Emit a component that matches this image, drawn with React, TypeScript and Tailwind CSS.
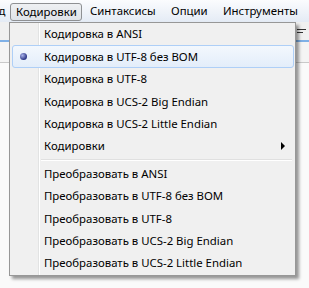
import React from "react";

const enc = [
  "Кодировка в ANSI",
  "Кодировка в UTF-8 без BOM",
  "Кодировка в UTF-8",
  "Кодировка в UCS-2 Big Endian",
  "Кодировка в UCS-2 Little Endian",
];
const conv = [
  "Преобразовать в ANSI",
  "Преобразовать в UTF-8 без BOM",
  "Преобразовать в UTF-8",
  "Преобразовать в UCS-2 Big Endian",
  "Преобразовать в UCS-2 Little Endian",
];

function Item({ label, checked, sub }: { label: string; checked?: boolean; sub?: boolean }) {
  return (
    <div className="relative h-[22.4px] flex items-center">
      {checked && (
        <div className="absolute left-[2px] right-[1px] top-0 bottom-0 rounded-[3px] border border-[#aecff7] bg-gradient-to-b from-[#f3f8fd] to-[#e3edfa]" />
      )}
      {checked && (
        <div className="absolute left-[10px] top-[8px] w-[7px] h-[7px] rounded-full bg-[radial-gradient(circle_at_35%_35%,#a9b3ea,#2b3585_70%)]" />
      )}
      <span className="relative pl-[34px] text-[11.4px] text-black leading-none whitespace-nowrap">{label}</span>
      {sub && (
        <svg className="absolute right-[10px] top-[7px]" width="4" height="8" viewBox="0 0 4 8">
          <path d="M0 0 L4 4 L0 8 Z" fill="#000" />
        </svg>
      )}
    </div>
  );
}

export default function App() {
  return (
    <div
      className="relative w-[309px] h-[288px] overflow-hidden bg-[#f7f7f7]"
      style={{ fontFamily: '"Noto Sans", "Segoe UI", sans-serif' }}
    >
      {/* menubar */}
      <div className="h-[22px] flex items-center bg-gradient-to-b from-[#fbfcfe] to-[#e4ebf5] text-[11.4px] text-black whitespace-nowrap">
        <span className="ml-[-16px] w-[26px] shrink-0">Вид</span>
        <span className="w-[72px] shrink-0 h-[18px] mt-[2px] pl-[5px] flex items-center rounded-[3px] border border-[#8e9093] bg-gradient-to-b from-[#eef0f3] to-[#dfe3e8]">
          Кодировки
        </span>
        <span className="ml-[8px] w-[81px] shrink-0">Синтаксисы</span>
        <span className="w-[52px] shrink-0">Опции</span>
        <span className="shrink-0">Инструменты</span>
      </div>
      {/* background content */}
      <div className="h-[18px] bg-[#f0f0f0] flex justify-end items-center pr-[3px]">
        <div className="flex flex-col gap-[2px] w-[9px]">
          <div className="h-[1px] bg-[#333]" />
          <div className="h-[1px] bg-[#333] w-[6px]" />
        </div>
      </div>
      <div className="h-[2px] bg-[#7fb0e6]" />
      <div className="h-[21px] bg-[#f4f4f4] border-b border-[#c9c9c9]" />
      <div className="h-[225px] bg-[#fafafa]" />

      {/* dropdown */}
      <div className="absolute left-[9px] top-[22px] w-[287px] border border-[#979797] bg-[#f0f0f0] shadow-[3px_3px_3px_rgba(0,0,0,0.4)] pt-0 pb-[1px]">
        <div className="absolute left-[28px] top-0 bottom-0 w-[1px] bg-[#e2e3e3]" />
        <div className="absolute left-[29px] top-0 bottom-0 w-[1px] bg-white" />
        {enc.map((l, i) => (
          <Item key={l} label={l} checked={i === 1} />
        ))}
        <Item label="Кодировки" sub />
        <div className="relative h-[5px] pl-[31px] pr-[3px] flex flex-col justify-center">
          <div className="h-[1px] bg-[#e0e0e0]" />
          <div className="h-[1px] bg-white" />
        </div>
        {conv.map((l) => (
          <Item key={l} label={l} />
        ))}
      </div>
    </div>
  );
}
